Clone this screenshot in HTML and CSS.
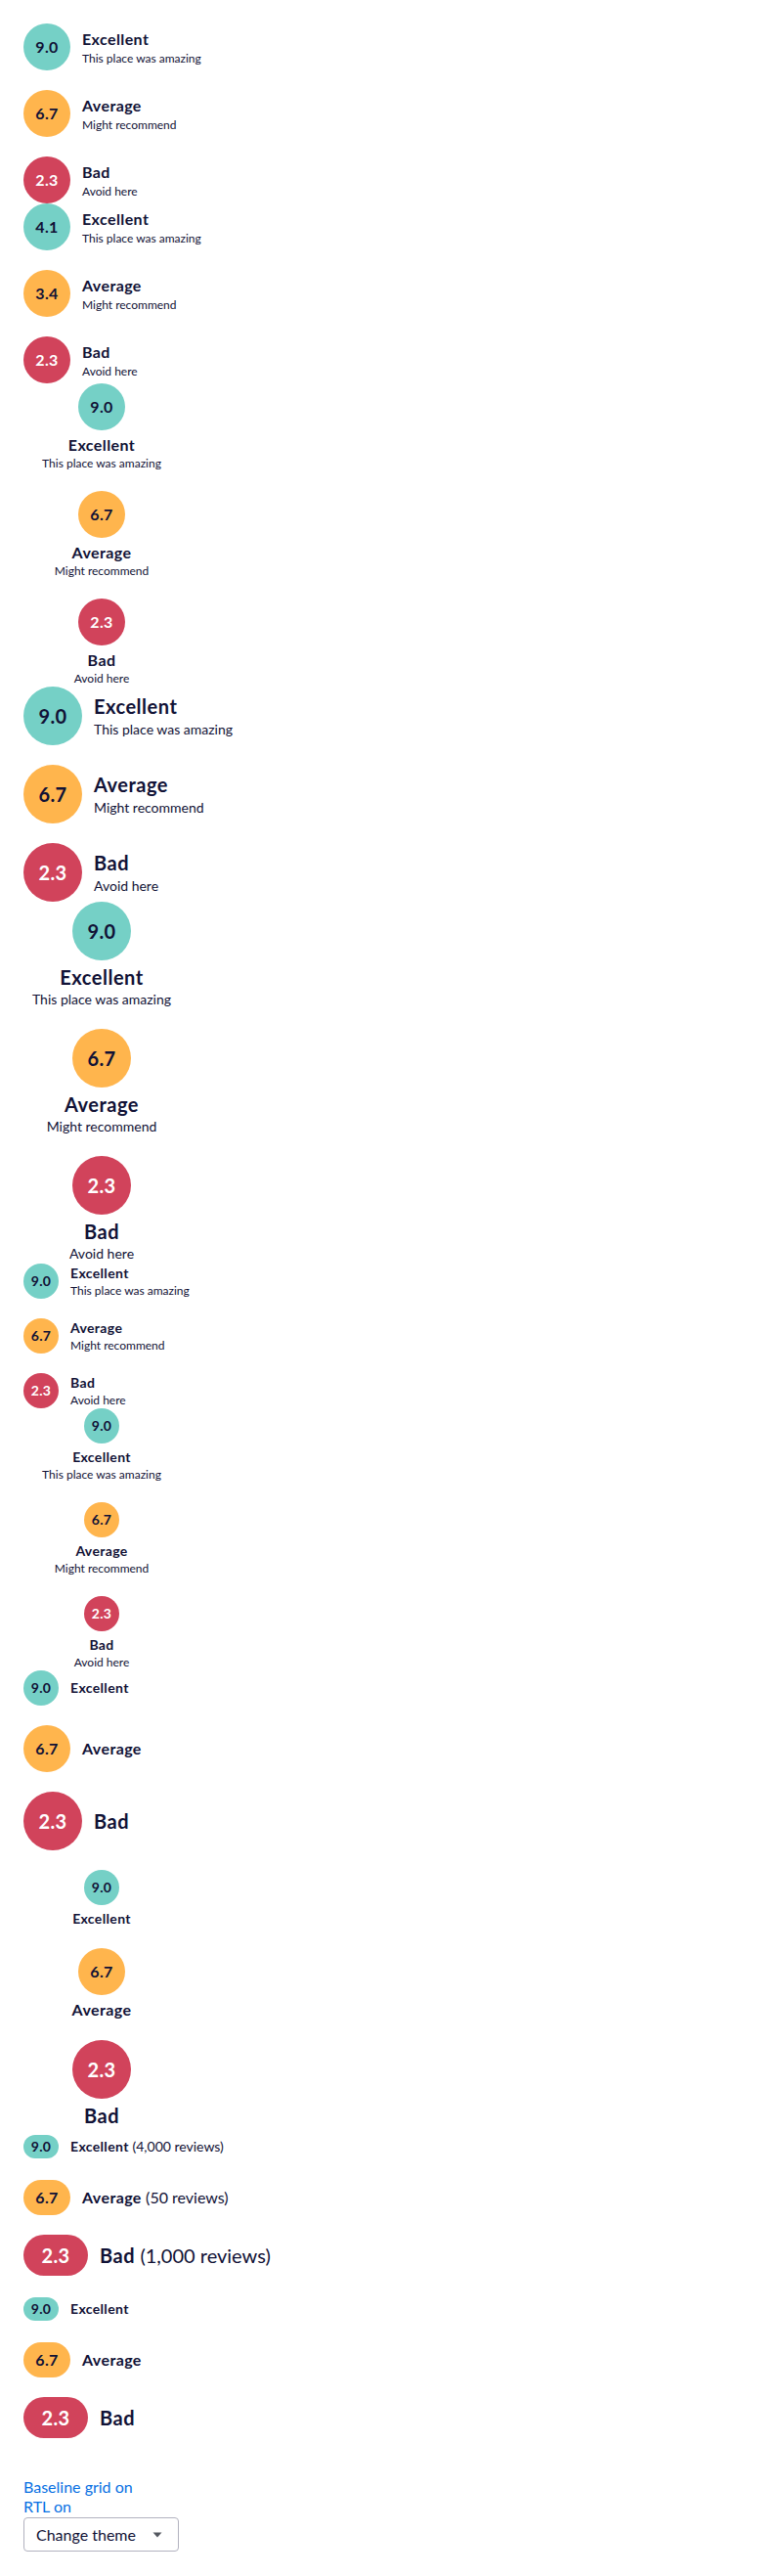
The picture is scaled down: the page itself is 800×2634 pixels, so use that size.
FILE: index.html
```html
<!DOCTYPE html>
<html lang="en">
<head>
<meta charset="utf-8">
<title>Rating</title>
<link rel="stylesheet" href="styles.css">
</head>
<body>
<main class="page">

  <section class="group">
    <div class="rating rating--h">
      <div class="badge badge--base badge--high">9.0</div>
      <div class="rtext rtext--base"><div class="title">Excellent</div><div class="sub">This place was amazing</div></div>
    </div>
    <div class="rating rating--h">
      <div class="badge badge--base badge--mid">6.7</div>
      <div class="rtext rtext--base"><div class="title">Average</div><div class="sub">Might recommend</div></div>
    </div>
    <div class="rating rating--h">
      <div class="badge badge--base badge--low">2.3</div>
      <div class="rtext rtext--base"><div class="title">Bad</div><div class="sub">Avoid here</div></div>
    </div>
  </section>

  <section class="group">
    <div class="rating rating--h">
      <div class="badge badge--base badge--high">4.1</div>
      <div class="rtext rtext--base"><div class="title">Excellent</div><div class="sub">This place was amazing</div></div>
    </div>
    <div class="rating rating--h">
      <div class="badge badge--base badge--mid">3.4</div>
      <div class="rtext rtext--base"><div class="title">Average</div><div class="sub">Might recommend</div></div>
    </div>
    <div class="rating rating--h">
      <div class="badge badge--base badge--low">2.3</div>
      <div class="rtext rtext--base"><div class="title">Bad</div><div class="sub">Avoid here</div></div>
    </div>
  </section>

  <section class="group">
    <div class="rating rating--v">
      <div class="badge badge--base badge--high">9.0</div>
      <div class="rtext rtext--base"><div class="title">Excellent</div><div class="sub">This place was amazing</div></div>
    </div>
    <div class="rating rating--v">
      <div class="badge badge--base badge--mid">6.7</div>
      <div class="rtext rtext--base"><div class="title">Average</div><div class="sub">Might recommend</div></div>
    </div>
    <div class="rating rating--v">
      <div class="badge badge--base badge--low">2.3</div>
      <div class="rtext rtext--base"><div class="title">Bad</div><div class="sub">Avoid here</div></div>
    </div>
  </section>

  <section class="group">
    <div class="rating rating--h">
      <div class="badge badge--lg badge--high">9.0</div>
      <div class="rtext rtext--lg"><div class="title">Excellent</div><div class="sub">This place was amazing</div></div>
    </div>
    <div class="rating rating--h">
      <div class="badge badge--lg badge--mid">6.7</div>
      <div class="rtext rtext--lg"><div class="title">Average</div><div class="sub">Might recommend</div></div>
    </div>
    <div class="rating rating--h">
      <div class="badge badge--lg badge--low">2.3</div>
      <div class="rtext rtext--lg"><div class="title">Bad</div><div class="sub">Avoid here</div></div>
    </div>
  </section>

  <section class="group">
    <div class="rating rating--v">
      <div class="badge badge--lg badge--high">9.0</div>
      <div class="rtext rtext--lg"><div class="title">Excellent</div><div class="sub">This place was amazing</div></div>
    </div>
    <div class="rating rating--v">
      <div class="badge badge--lg badge--mid">6.7</div>
      <div class="rtext rtext--lg"><div class="title">Average</div><div class="sub">Might recommend</div></div>
    </div>
    <div class="rating rating--v">
      <div class="badge badge--lg badge--low">2.3</div>
      <div class="rtext rtext--lg"><div class="title">Bad</div><div class="sub">Avoid here</div></div>
    </div>
  </section>

  <section class="group">
    <div class="rating rating--h">
      <div class="badge badge--sm badge--high">9.0</div>
      <div class="rtext rtext--sm"><div class="title">Excellent</div><div class="sub">This place was amazing</div></div>
    </div>
    <div class="rating rating--h">
      <div class="badge badge--sm badge--mid">6.7</div>
      <div class="rtext rtext--sm"><div class="title">Average</div><div class="sub">Might recommend</div></div>
    </div>
    <div class="rating rating--h">
      <div class="badge badge--sm badge--low">2.3</div>
      <div class="rtext rtext--sm"><div class="title">Bad</div><div class="sub">Avoid here</div></div>
    </div>
  </section>

  <section class="group">
    <div class="rating rating--v">
      <div class="badge badge--sm badge--high">9.0</div>
      <div class="rtext rtext--sm"><div class="title">Excellent</div><div class="sub">This place was amazing</div></div>
    </div>
    <div class="rating rating--v">
      <div class="badge badge--sm badge--mid">6.7</div>
      <div class="rtext rtext--sm"><div class="title">Average</div><div class="sub">Might recommend</div></div>
    </div>
    <div class="rating rating--v">
      <div class="badge badge--sm badge--low">2.3</div>
      <div class="rtext rtext--sm"><div class="title">Bad</div><div class="sub">Avoid here</div></div>
    </div>
  </section>

  <section class="group group--spaced">
    <div class="rating rating--h">
      <div class="badge badge--sm badge--high">9.0</div>
      <div class="rtext rtext--sm"><div class="title">Excellent</div></div>
    </div>
    <div class="rating rating--h">
      <div class="badge badge--base badge--mid">6.7</div>
      <div class="rtext rtext--base"><div class="title">Average</div></div>
    </div>
    <div class="rating rating--h">
      <div class="badge badge--lg badge--low">2.3</div>
      <div class="rtext rtext--lg"><div class="title">Bad</div></div>
    </div>
  </section>

  <section class="group">
    <div class="rating rating--v">
      <div class="badge badge--sm badge--high">9.0</div>
      <div class="rtext rtext--sm"><div class="title">Excellent</div></div>
    </div>
    <div class="rating rating--v">
      <div class="badge badge--base badge--mid">6.7</div>
      <div class="rtext rtext--base"><div class="title">Average</div></div>
    </div>
    <div class="rating rating--v">
      <div class="badge badge--lg badge--low">2.3</div>
      <div class="rtext rtext--lg"><div class="title">Bad</div></div>
    </div>
  </section>

  <section class="group group--chips">
    <div class="rating rating--h rating--chip-sm">
      <div class="pill pill--sm badge--high">9.0</div>
      <div class="rtext rtext--sm"><div class="title">Excellent <span class="count">(4,000 reviews)</span></div></div>
    </div>
    <div class="rating rating--h">
      <div class="pill pill--base badge--mid">6.7</div>
      <div class="rtext rtext--base"><div class="title">Average <span class="count">(50 reviews)</span></div></div>
    </div>
    <div class="rating rating--h">
      <div class="pill pill--lg badge--low">2.3</div>
      <div class="rtext rtext--lg"><div class="title">Bad <span class="count">(1,000 reviews)</span></div></div>
    </div>
  </section>

  <section class="group group--chips2">
    <div class="rating rating--h rating--chip-sm">
      <div class="pill pill--sm badge--high">9.0</div>
      <div class="rtext rtext--sm"><div class="title">Excellent</div></div>
    </div>
    <div class="rating rating--h">
      <div class="pill pill--base badge--mid">6.7</div>
      <div class="rtext rtext--base"><div class="title">Average</div></div>
    </div>
    <div class="rating rating--h">
      <div class="pill pill--lg badge--low">2.3</div>
      <div class="rtext rtext--lg"><div class="title">Bad</div></div>
    </div>
  </section>

  <nav class="controls">
    <a href="#" class="link">Baseline grid on</a>
    <a href="#" class="link">RTL on</a>
    <div class="select">
      <span>Change theme</span>
      <svg class="select__caret" width="10" height="6" viewBox="0 0 10 6" aria-hidden="true"><path d="M0.5 0.5 L9.5 0.5 L5 5.5 Z" fill="#545860"/></svg>
    </div>
  </nav>

</main>
</body>
</html>
```

FILE: styles.css
```css
* { box-sizing: border-box; }

html, body {
  margin: 0;
  padding: 0;
  background: #ffffff;
}

body {
  font-family: Lato, "Liberation Sans", Arial, sans-serif;
  color: #111236;
}

.page {
  padding: 24px;
}

.group {
  display: flex;
  flex-direction: column;
  gap: 20px;
}

.group--spaced {
  margin-bottom: 20px;
}

.group--chips {
  margin-top: 5px;
  margin-bottom: 20px;
}

.rating {
  display: flex;
}

.rating--h {
  flex-direction: row;
  align-items: center;
  gap: 12px;
}

.rating--v {
  flex-direction: column;
  align-items: center;
  width: 160px;
  text-align: center;
}

.rating--v .badge {
  margin-bottom: 4px;
}

.rating--chip-sm {
  min-height: 28px;
}

.badge,
.pill {
  display: flex;
  align-items: center;
  justify-content: center;
  flex-shrink: 0;
  font-weight: 700;
  line-height: 1;
  letter-spacing: 0.02em;
  color: #111236;
}

.badge { border-radius: 50%; }

.badge--sm { width: 36px; height: 36px; font-size: 14px; }
.badge--base { width: 48px; height: 48px; font-size: 16px; }
.badge--lg { width: 60px; height: 60px; font-size: 20px; }

.pill--sm { width: 36px; height: 24px; border-radius: 12px; font-size: 14px; }
.pill--base { width: 48px; height: 36px; border-radius: 18px; font-size: 16px; }
.pill--lg { width: 66px; height: 42px; border-radius: 21px; font-size: 20px; }

.badge--high { background: #75d0c6; }
.badge--mid { background: #ffb54d; }
.badge--low { background: #d1435b; color: #ffffff; }

.rtext .title {
  font-weight: 700;
  letter-spacing: 0.025em;
}

.rtext .sub {
  font-weight: 400;
}

.count {
  font-weight: 400;
  letter-spacing: 0;
}

.rtext--sm .title { font-size: 14px; line-height: 20px; }
.rtext--sm .sub { font-size: 12px; line-height: 16px; }

.rtext--base .title { font-size: 16px; line-height: 24px; }
.rtext--base .sub { font-size: 12px; line-height: 16px; }

.rtext--lg .title { font-size: 20px; line-height: 28px; }
.rtext--lg .sub { font-size: 14px; line-height: 20px; }

.rating--v .rtext--base .title { line-height: 22px; }
.rating--v .rtext--lg .title { line-height: 26px; }

.controls {
  display: flex;
  flex-direction: column;
  align-items: flex-start;
  margin-top: 40px;
}

.link {
  color: #0770e3;
  text-decoration: none;
  font-size: 16px;
  line-height: 20px;
}

.select {
  display: flex;
  align-items: center;
  justify-content: space-between;
  width: 159px;
  height: 35px;
  margin-top: 1px;
  padding: 0 16px 0 12px;
  border: 1px solid #b2b2bf;
  border-radius: 4px;
  font-size: 16px;
  color: #111236;
}

.select__caret {
  display: block;
}
```
